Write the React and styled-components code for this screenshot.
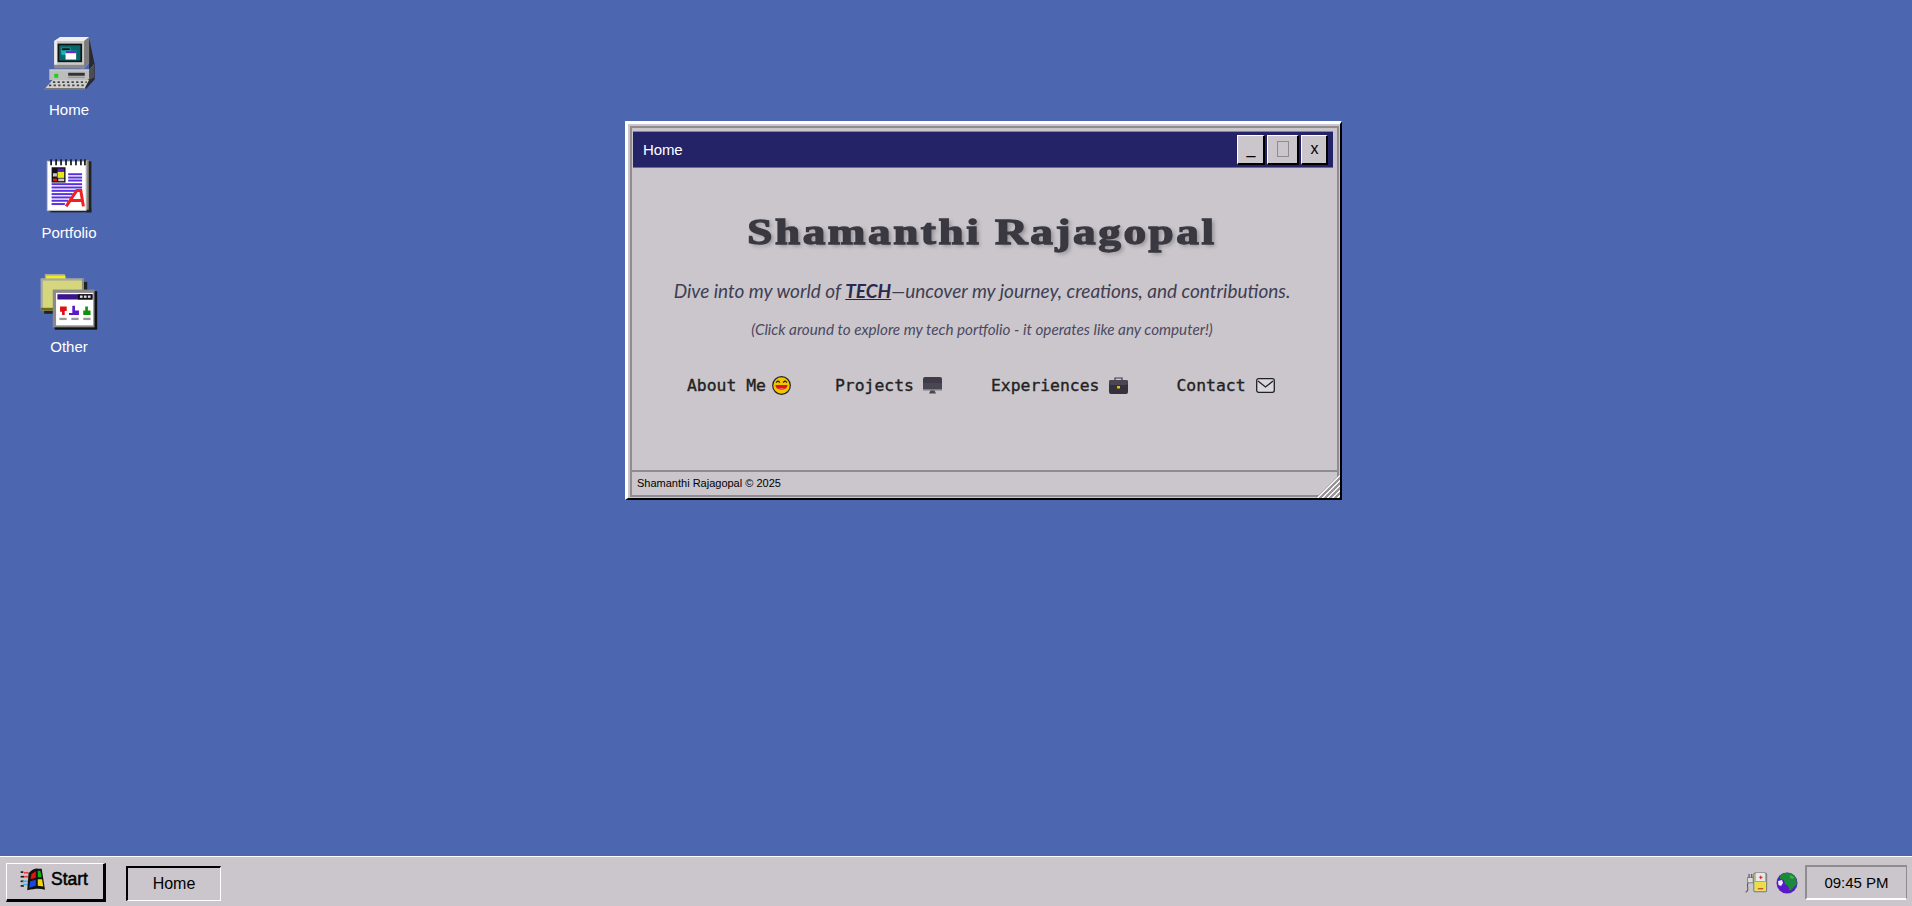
import React from "react";
import styled, { createGlobalStyle } from "styled-components";

const Global = createGlobalStyle`
  html, body { margin: 0; padding: 0; height: 100%; overflow: hidden; }
  body { font-family: "Liberation Sans", Arial, sans-serif; background: #4d66b0; }
  * { box-sizing: border-box; }
`;

const Screen = styled.div`
  height: 906px;
  display: flex;
  flex-direction: column;
`;
const Desktop = styled.main`
  flex: 1;
  position: relative;
  background: #4d66b0;
  padding-top: 35px;
`;
const IconColumn = styled.nav`
  width: 138px;
  display: flex;
  flex-direction: column;
  align-items: center;
`;
const DesktopIcon = styled.div`
  display: flex;
  flex-direction: column;
  align-items: center;
  margin-bottom: ${(p) => p.$after}px;
`;
const IconLabel = styled.span`
  margin-top: ${(p) => p.$top}px;
  height: 18px;
  line-height: 18px;
  font-size: 15px;
  color: #fff;
`;
const PixelArt = styled.svg`
  display: block;
  flex: none;
  filter: blur(0.35px);
`;

/* window */
const Window = styled.section`
  position: absolute;
  left: 625px;
  top: 121px;
  width: 717px;
  height: 379px;
  background: #cac6cc;
  border-style: solid;
  border-width: 3px 2px 2px 3px;
  border-color: #fff #000 #000 #fff;
  padding: 2px 1px 1px 2px;
`;
const Frame = styled.div`
  position: relative;
  height: 100%;
  border: 2px solid #8f8c90;
  display: flex;
  flex-direction: column;
`;
const TitleBar = styled.header`
  margin: 3px 4px 0 1px;
  height: 37px;
  flex: none;
  background: #242368;
  border-top: 1px solid #85829a;
  border-bottom: 1px solid #6f6c90;
  display: flex;
  align-items: center;
  justify-content: space-between;
  padding: 0 5px 0 10px;
`;
const TitleText = styled.span`
  color: #fff;
  font-size: 15px;
  letter-spacing: -0.1px;
`;
const WinButtons = styled.div`
  display: flex;
  gap: 2px;
`;
const WinButton = styled.button`
  width: ${(p) => p.$w}px;
  height: 30px;
  padding: 0 0 0 1px;
  background: #cac6cc;
  border-style: solid;
  border-width: 1px 2px 2px 1px;
  border-color: #fff #000 #000 #fff;
  font-family: "Liberation Sans", Arial, sans-serif;
  font-size: 16px;
  color: #000;
  display: flex;
  align-items: center;
  justify-content: center;
`;
const MaxGlyph = styled.span`
  display: block;
  width: 12px;
  height: 16px;
  border: 1px solid #8f8c90;
`;
const Content = styled.div`
  flex: 1;
  display: flex;
  flex-direction: column;
  align-items: center;
  padding: 45px 5px 0 0;
`;
const Heading = styled.h1`
  margin: 0;
  height: 40px;
  line-height: 40px;
  font-family: "Liberation Serif", serif;
  font-weight: 700;
  font-size: 35px;
  letter-spacing: 2px;
  color: #3a3840;
  -webkit-text-stroke: 1.3px #3a3840;
  text-shadow: 2px 2px 4px rgba(0, 0, 0, 0.3);
  transform: scaleX(1.29);
  white-space: nowrap;
`;
const Tagline = styled.p`
  margin: 26px 0 0;
  height: 24px;
  line-height: 24px;
  font-family: Lato, sans-serif;
  font-style: italic;
  font-size: 19px;
  color: #3f3e52;
  white-space: nowrap;
`;
const Tech = styled.strong`
  color: #282850;
  font-weight: 700;
  text-decoration: underline;
`;
const Hint = styled.p`
  margin: 17px 0 0;
  height: 18px;
  line-height: 18px;
  font-family: Lato, sans-serif;
  font-style: italic;
  font-size: 15.25px;
  color: #4a4960;
  white-space: nowrap;
`;
const Links = styled.div`
  margin-top: 38px;
  display: flex;
  align-items: center;
  align-self: flex-start;
  padding-left: 55px;
`;
const LinkItem = styled.a`
  display: flex;
  align-items: center;
  gap: ${(p) => p.$gap}px;
  margin-right: ${(p) => p.$after}px;
  font-family: "DejaVu Sans Mono", monospace;
  font-size: 16.4px;
  color: #222;
  -webkit-text-stroke: 0.35px #222;
  white-space: nowrap;
`;
const StatusBar = styled.footer`
  flex: none;
  height: 25px;
  border-top: 2px solid #8f8c90;
  display: flex;
  align-items: center;
  padding: 0 0 2px 5px;
  font-size: 11px;
  color: #000;
`;
const Grip = styled.div`
  position: absolute;
  right: -3px;
  bottom: -3px;
  width: 24px;
  height: 24px;
  clip-path: polygon(100% 0, 100% 100%, 0 100%);
  background: repeating-linear-gradient(
    135deg,
    #f1f0f2 0 1.5px,
    #98959a 1.5px 3.5px
  );
`;

/* taskbar */
const Taskbar = styled.footer`
  height: 50px;
  flex: none;
  background: #cac6cc;
  border-top: 1px solid #fff;
  padding: 6px 5px 4px 6px;
  display: flex;
  align-items: flex-start;
`;
const StartButton = styled.button`
  width: 100px;
  height: 39px;
  padding: 0 0 4px 13px;
  background: #cac6cc;
  border-style: solid;
  border-width: 1px 3px 3px 1px;
  border-color: #fff #000 #000 #fff;
  display: flex;
  align-items: center;
  gap: 6px;
  font-family: "Liberation Sans", Arial, sans-serif;
  font-size: 17.5px;
  color: #000;
  -webkit-text-stroke: 0.5px #000;
`;
const TaskButton = styled.div`
  margin: 3px 0 0 20px;
  width: 95px;
  height: 35px;
  border-style: solid;
  border-width: 2px 1px 1px 2px;
  border-color: #000 #fff #fff #000;
  display: flex;
  align-items: center;
  justify-content: center;
  font-size: 16px;
  color: #000;
`;
const Tray = styled.div`
  margin-left: auto;
  display: flex;
  align-items: center;
  gap: 8px;
  margin-top: 2px;
`;
const Clock = styled.div`
  margin-left: -1px;
  width: 102px;
  height: 35px;
  border-style: solid;
  border-width: 2px 1px 2px 2px;
  border-color: #8f8c90 #8f8c90 #fff #8f8c90;
  display: flex;
  align-items: center;
  justify-content: center;
  font-size: 15px;
  color: #000;
`;

/* drawings: viewBoxes are in 3x coordinates */
const ComputerIcon = () => (
  <PixelArt width="57" height="57" viewBox="60 45 172 170">
    <polygon points="205,52 222,132 222,178 195,208 190,180 205,150" fill="#2a2a30" />
    <polygon points="100,62 118,50 205,50 205,128 190,145 100,136" fill="#c9c9c9" />
    <polygon points="100,62 118,50 205,50 190,62" fill="#efefef" />
    <rect x="100" y="62" width="8" height="72" fill="#ececec" />
    <polygon points="190,62 205,50 205,128 190,145" fill="#7c7c7c" />
    <polygon points="100,134 190,134 190,145 100,145" fill="#8a8a8a" />
    <rect x="110" y="70" width="74" height="56" fill="#111" />
    <rect x="115" y="75" width="64" height="46" fill="#06686c" />
    <rect x="121" y="82" width="28" height="22" fill="#10b8b8" />
    <rect x="123" y="84" width="24" height="6" fill="#111" />
    <rect x="134" y="92" width="32" height="26" fill="#fff" />
    <rect x="134" y="92" width="32" height="7" fill="#6a2bc8" />
    <polygon points="85,150 205,150 220,132 220,170 200,180 85,180" fill="#bdbdbd" />
    <polygon points="205,150 220,132 220,172 205,180" fill="#4c4c52" />
    <rect x="85" y="148" width="120" height="3" fill="#efefef" />
    <rect x="100" y="161" width="12" height="12" fill="#14d814" />
    <rect x="142" y="158" width="50" height="9" fill="#333" />
    <rect x="142" y="170" width="50" height="3" fill="#8a8a8a" />
    <polygon points="95,180 205,180 190,208 70,208" fill="#cfcfcf" />
    <polygon points="70,204 190,204 190,210 70,210" fill="#777" />
    <g stroke="#444" strokeWidth="5" strokeDasharray="7 7">
      <line x1="96" y1="186" x2="198" y2="186" />
      <line x1="84" y1="196" x2="192" y2="196" />
    </g>
  </PixelArt>
);

const PortfolioIcon = () => (
  <PixelArt width="57" height="57" viewBox="60 35 172 172">
    <rect x="198" y="48" width="14" height="154" fill="#222" />
    <rect x="88" y="190" width="124" height="12" fill="#222" />
    <rect x="192" y="44" width="12" height="150" fill="#8a8a8a" />
    <rect x="79" y="48" width="117" height="148" fill="#fff" stroke="#c8c8c8" strokeWidth="3" />
    <g fill="#111">
      {[88, 103, 118, 133, 148, 163, 178, 190].map((x) => (
        <rect key={x} x={x} y="42" width="5" height="18" />
      ))}
    </g>
    <rect x="92" y="66" width="42" height="46" fill="#111" />
    <rect x="110" y="70" width="20" height="10" fill="#5a18c8" />
    <rect x="110" y="80" width="20" height="18" fill="#e8e818" />
    <rect x="96" y="100" width="12" height="8" fill="#e01818" />
    <rect x="96" y="84" width="12" height="10" fill="#c8c8c8" />
    <rect x="112" y="100" width="18" height="8" fill="#c8c8c8" />
    <g fill="#5a30e0">
      <rect x="142" y="84" width="42" height="6" />
      <rect x="142" y="94" width="42" height="6" />
      <rect x="142" y="103" width="42" height="6" />
      <rect x="92" y="114" width="92" height="6" />
      <rect x="92" y="124" width="92" height="6" />
      <rect x="92" y="134" width="92" height="6" />
      <rect x="92" y="144" width="64" height="6" />
      <rect x="92" y="154" width="58" height="6" />
      <rect x="92" y="164" width="50" height="6" />
      <rect x="92" y="174" width="40" height="6" />
    </g>
    <path d="M136 184 L168 136 L180 136 L188 184 M150 166 L184 166" fill="none" stroke="#f02020" strokeWidth="9" />
  </PixelArt>
);

const OtherIcon = () => (
  <PixelArt width="60" height="58" viewBox="55 385 180 175">
    <defs>
      <pattern id="dither" width="6" height="6" patternUnits="userSpaceOnUse">
        <rect width="6" height="6" fill="#f4f650" />
        <rect width="3" height="3" fill="#b8b8a0" />
        <rect x="3" y="3" width="3" height="3" fill="#b8b8a0" />
      </pattern>
    </defs>
    <rect x="70" y="498" width="130" height="10" fill="#222" />
    <rect x="190" y="412" width="10" height="40" fill="#222" />
    <polygon points="72,388 132,388 136,402 72,402" fill="#a8a8a0" />
    <rect x="76" y="393" width="58" height="9" fill="#f0f018" />
    <rect x="60" y="402" width="130" height="96" fill="url(#dither)" />
    <rect x="60" y="402" width="130" height="6" fill="#a8a8a0" />
    <rect x="60" y="402" width="6" height="96" fill="#a8a8a0" />
    <rect x="60" y="490" width="40" height="8" fill="#6b6b20" />
    <rect x="184" y="402" width="6" height="34" fill="#8a8a80" />
    <rect x="102" y="440" width="128" height="116" fill="#111" />
    <rect x="96" y="435" width="126" height="114" fill="#8a8a8a" />
    <rect x="106" y="445" width="112" height="98" fill="#fff" />
    <rect x="110" y="449" width="106" height="16" fill="#3a1488" />
    <rect x="172" y="449" width="44" height="16" fill="#111" />
    <g fill="#ddd">
      <rect x="178" y="453" width="8" height="7" />
      <rect x="190" y="453" width="8" height="7" />
      <rect x="202" y="453" width="8" height="7" />
    </g>
    <path d="M118 486 h20 v14 h-6 v12 h-8 v-10 h-6z" fill="#e01010" />
    <path d="M155 484 h8 v14 h12 v14 h-30 v-6 h10z" fill="#5a18c8" />
    <path d="M194 486 h8 v12 h8 v14 h-22 v-14 h6z" fill="#109010" />
    <g fill="#999">
      <rect x="116" y="520" width="22" height="7" />
      <rect x="152" y="520" width="22" height="7" />
      <rect x="188" y="520" width="22" height="7" />
    </g>
  </PixelArt>
);

const LaughIcon = () => (
  <svg width="19" height="19" viewBox="0 0 19 19">
    <circle cx="9.5" cy="9.5" r="8.8" fill="#f4c400" stroke="#222" strokeWidth="1.2" />
    <path d="M4 6.5 L6 5 L8 6.5 M11 6.5 L13 5 L15 6.5" fill="none" stroke="#222" strokeWidth="1.2" />
    <path d="M3.5 9 H15.5 C15.5 12 13 13.5 9.5 13.5 C6 13.5 3.5 12 3.5 9Z" fill="#d81818" />
    <path d="M6 13 C8 11.5 11 11.5 13 13 C11 14 8 14 6 13Z" fill="#f06060" />
  </svg>
);
const MonitorIcon = () => (
  <svg width="19" height="17" viewBox="0 0 19 17">
    <rect x="0" y="0" width="19" height="12" rx="2" fill="#3f3b48" />
    <rect x="0" y="6" width="19" height="6" fill="#4a4652" />
    <rect x="0" y="12" width="19" height="1.5" fill="#807c88" />
    <path d="M6 16.5 H13 L11.5 13.5 H7.5Z" fill="#4a4652" />
  </svg>
);
const BriefcaseIcon = () => (
  <svg width="19" height="17" viewBox="0 0 19 17">
    <path d="M6 3 V1 H13 V3" fill="none" stroke="#3f3b48" strokeWidth="1.2" />
    <rect x="0" y="3" width="19" height="14" rx="2" fill="#35323c" />
    <rect x="0" y="3" width="19" height="5" rx="2" fill="#4a4652" />
    <rect x="8" y="9" width="3" height="2.5" fill="#d8c020" />
  </svg>
);
const MailIcon = () => (
  <svg width="19" height="15" viewBox="0 0 19 15">
    <rect x="0.7" y="0.7" width="17.6" height="13.6" rx="2" fill="#dad8dc" stroke="#222" strokeWidth="1.3" />
    <path d="M2 3 L9.5 9 L17 3" fill="none" stroke="#222" strokeWidth="1.3" />
  </svg>
);

const WindowsFlag = () => (
  <PixelArt width="25" height="23" viewBox="60 56 72 70">
    <g fill="#111">
      <rect x="60" y="66" width="8" height="5" />
      <rect x="60" y="80" width="10" height="5" />
      <rect x="60" y="94" width="10" height="5" />
      <rect x="60" y="108" width="10" height="5" />
    </g>
    <g fill="#e84040">
      <rect x="70" y="68" width="14" height="5" />
      <rect x="70" y="80" width="14" height="5" />
    </g>
    <g fill="#48b0f0">
      <rect x="66" y="94" width="16" height="5" />
      <rect x="66" y="104" width="16" height="5" />
    </g>
    <path d="M84 72 C92 64 100 56 112 58 L124 58 L134 122 C120 118 104 118 80 124Z" fill="#111" />
    <path d="M93 74 L106 66 L106 86 L90 90Z" fill="#e81010" />
    <path d="M112 64 L120 64 L124 84 L112 84Z" fill="#10b010" />
    <path d="M89 96 L106 92 L106 110 L86 116Z" fill="#1848e0" />
    <path d="M112 90 L125 90 L129 112 L112 110Z" fill="#f0d810" />
  </PixelArt>
);
const BatteryIcon = () => (
  <PixelArt width="23" height="23" viewBox="44 58 68 66">
    <rect x="70" y="64" width="38" height="54" rx="3" fill="#dfe08a" stroke="#777" strokeWidth="3" />
    <rect x="74" y="62" width="30" height="26" fill="#e8e8e8" stroke="#888" strokeWidth="2" />
    <rect x="86" y="74" width="10" height="3" fill="#e01818" />
    <rect x="89" y="71" width="3" height="10" fill="#e01818" />
    <rect x="74" y="90" width="30" height="24" fill="#e8e040" />
    <rect x="82" y="108" width="16" height="3" fill="#d02020" />
    <path d="M66 90 H58 C52 90 50 96 52 104 C54 114 50 118 46 120" fill="none" stroke="#555" strokeWidth="3" />
    <rect x="52" y="76" width="16" height="16" fill="#ddd" stroke="#666" strokeWidth="2" />
    <path d="M56 66 V76 M64 66 V76" stroke="#444" strokeWidth="3" />
  </PixelArt>
);
const GlobeIcon = () => (
  <PixelArt width="22" height="22" viewBox="0 0 22 22">
    <circle cx="11" cy="11" r="10.5" fill="#5a18c8" />
    <path d="M4 4 C9 -1 17 0 20 6 L21 12 L17 16 L14 19 L12 14 L9 12 L8 8 L4 7Z" fill="#1a8a3a" />
    <path d="M2 9 L6 8 L7 11 L5 14 L2.5 13Z" fill="#e8ecf8" />
    <path d="M14 3 L18 5 L17 7 L14 6Z" fill="#3fb050" />
  </PixelArt>
);

export default function App() {
  return (
    <>
      <Global />
      <Screen>
        <Desktop>
          <IconColumn>
            <DesktopIcon $after={38}>
              <ComputerIcon />
              <IconLabel $top={9}>Home</IconLabel>
            </DesktopIcon>
            <DesktopIcon $after={31}>
              <PortfolioIcon />
              <IconLabel $top={10}>Portfolio</IconLabel>
            </DesktopIcon>
            <DesktopIcon $after={0}>
              <OtherIcon />
              <IconLabel $top={7}>Other</IconLabel>
            </DesktopIcon>
          </IconColumn>

          <Window>
            <Frame>
              <TitleBar>
                <TitleText>Home</TitleText>
                <WinButtons>
                  <WinButton $w={28}>_</WinButton>
                  <WinButton $w={32}><MaxGlyph /></WinButton>
                  <WinButton $w={27}>x</WinButton>
                </WinButtons>
              </TitleBar>
              <Content>
                <Heading>Shamanthi Rajagopal</Heading>
                <Tagline>
                  Dive into my world of <Tech>TECH</Tech>—uncover my journey, creations, and contributions.
                </Tagline>
                <Hint>(Click around to explore my tech portfolio - it operates like any computer!)</Hint>
                <Links>
                  <LinkItem $gap={6} $after={44}>About Me <LaughIcon /></LinkItem>
                  <LinkItem $gap={9} $after={49}>Projects <MonitorIcon /></LinkItem>
                  <LinkItem $gap={10} $after={48}>Experiences <BriefcaseIcon /></LinkItem>
                  <LinkItem $gap={10} $after={0}>Contact <MailIcon /></LinkItem>
                </Links>
              </Content>
              <StatusBar>Shamanthi Rajagopal © 2025</StatusBar>
              <Grip />
            </Frame>
          </Window>
        </Desktop>
        <Taskbar>
          <StartButton><WindowsFlag />Start</StartButton>
          <TaskButton>Home</TaskButton>
          <Tray>
            <BatteryIcon />
            <GlobeIcon />
            <Clock>09:45 PM</Clock>
          </Tray>
        </Taskbar>
      </Screen>
    </>
  );
}
